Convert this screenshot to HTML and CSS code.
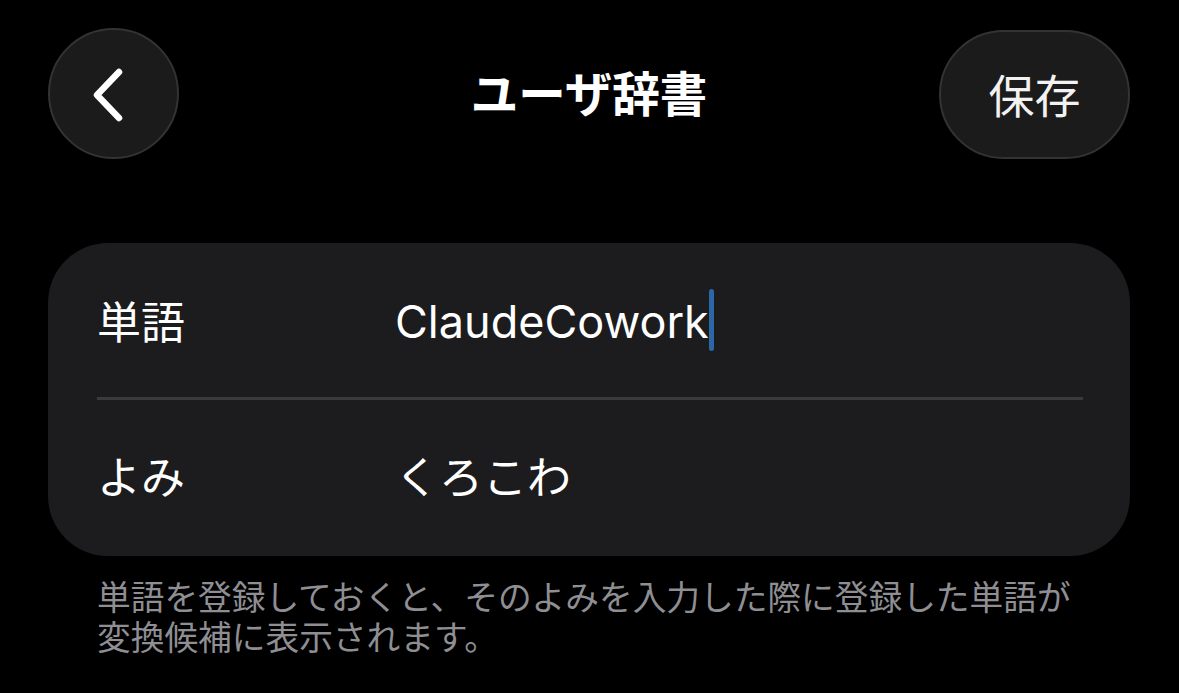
FILE: index.html
```html
<!DOCTYPE html>
<html lang="ja">
<head>
<meta charset="utf-8">
<title>ユーザ辞書</title>
<link rel="stylesheet" href="styles.css">
</head>
<body>
<div class="screen">
  <header class="nav">
    <button class="back" aria-label="戻る">
      <svg width="40" height="60" viewBox="0 0 40 60">
        <path d="M30 10 L8 33 L30 56" fill="none" stroke="#ffffff" stroke-width="6.5" stroke-linecap="round" stroke-linejoin="round"/>
      </svg>
    </button>
    <h1 class="title">ユーザ辞書</h1>
    <button class="save">保存</button>
  </header>

  <section class="card">
    <div class="row">
      <div class="label">単語</div>
      <div class="value">ClaudeCowork<span class="cursor"></span></div>
    </div>
    <div class="divider"></div>
    <div class="row row-reading">
      <div class="label">よみ</div>
      <div class="value">くろこわ</div>
    </div>
  </section>

  <p class="note">単語を登録しておくと、そのよみを入力した際に登録した単語が変換候補に表示されます。</p>
</div>
</body>
</html>
```

FILE: styles.css
```css
html, body {
  margin: 0;
  padding: 0;
  background: #000000;
}

body {
  font-family: "Inter", "Noto Sans CJK JP", sans-serif;
  color: #ffffff;
}

.screen {
  width: 1179px;
  height: 693px;
  padding: 28px 49px 0 48px;
  box-sizing: border-box;
  overflow: hidden;
}

.nav {
  display: grid;
  grid-template-columns: 1fr auto 1fr;
  align-items: center;
  height: 131px;
}

.back {
  justify-self: start;
  width: 131px;
  height: 131px;
  border-radius: 50%;
  background: #1b1b1b;
  border: 2px solid #333333;
  box-sizing: border-box;
  display: flex;
  align-items: center;
  justify-content: center;
  padding: 0 10px 4px 0;
  margin: 0;
  cursor: pointer;
}

.back svg {
  display: block;
}

.title {
  margin: 0 0 5px 0;
  font-family: "Noto Sans CJK JP", sans-serif;
  font-size: 47.5px;
  font-weight: 700;
  color: #ffffff;
}

.save {
  justify-self: end;
  width: 191px;
  height: 129px;
  border-radius: 65px;
  background: #1b1b1b;
  border: 2px solid #333333;
  box-sizing: border-box;
  color: #f2f2f2;
  font-family: "Noto Sans CJK JP", sans-serif;
  font-size: 46px;
  font-weight: 400;
  padding: 0 0 4px 0;
  margin: 2px 0 0 0;
  cursor: pointer;
}

.card {
  margin-top: 84px;
  width: 1082px;
  background: #1c1c1e;
  border-radius: 60px;
  padding: 0 47px 0 49px;
  box-sizing: border-box;
}

.row {
  display: flex;
  align-items: center;
  height: 154px;
}

.row-reading {
  height: 156px;
  padding-bottom: 7px;
  box-sizing: border-box;
}

.label {
  width: 298px;
  flex: none;
  font-size: 44px;
  color: #ffffff;
  font-family: "Noto Sans CJK JP", sans-serif;
}

.value {
  font-size: 45px;
  color: #ffffff;
  display: flex;
  align-items: center;
  padding-top: 3px;
}

.row-reading .value {
  padding-top: 0;
  font-size: 44px;
}

.value .cursor {
  display: inline-block;
  width: 5px;
  height: 62px;
  border-radius: 3px;
  background: #2b66a6;
  margin-left: 0;
  margin-top: -3px;
}

.divider {
  height: 3px;
  background: #3a3a3c;
}

.note {
  margin: 20px 0 0 0;
  padding: 0 45px 0 49px;
  font-family: "Noto Sans CJK JP", sans-serif;
  font-size: 33.7px;
  line-height: 40px;
  color: #8e8e93;
}
```
